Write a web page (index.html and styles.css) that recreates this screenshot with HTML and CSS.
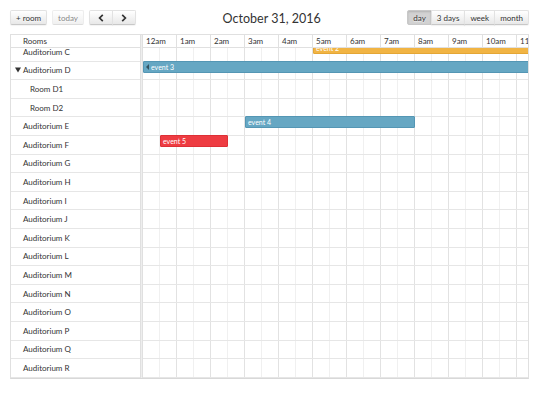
FILE: index.html
```html
<!DOCTYPE html>
<html lang="en">
  <head>
    <meta name="viewport" content="width=device-width, initial-scale=1.0" />
    <title>Scheduler</title>
    <link rel="stylesheet" href="styles.css">
  </head>
  <body>
    <div class="calendar">
      <div class="toolbar">
        <div class="toolbar-left">
          <button class="btn">+ room</button>
          <button class="btn" disabled>today</button>
          <div class="btn-group">
            <button class="btn arrow">
              <svg width="6" height="8" viewBox="0 0 6 8"><path d="M4.8 0.8 L1.6 4 L4.8 7.2" fill="none" stroke="#333" stroke-width="1.7"/></svg>
            </button>
            <button class="btn arrow">
              <svg width="6" height="8" viewBox="0 0 6 8"><path d="M1.2 0.8 L4.4 4 L1.2 7.2" fill="none" stroke="#333" stroke-width="1.7"/></svg>
            </button>
          </div>
        </div>
        <h2 class="title">October 31, 2016</h2>
        <div class="btn-group">
          <button class="btn active">day</button>
          <button class="btn">3 days</button>
          <button class="btn">week</button>
          <button class="btn">month</button>
        </div>
      </div>

      <div class="view">
        <!-- resource list -->
        <div class="resource-area">
          <div class="head"><span class="spacer"></span>Rooms</div>
          <div class="body">
            <div class="rows">
              <div class="row"><span class="spacer"></span>Auditorium C</div>
              <div class="row"><span class="spacer expander"><svg width="6" height="6" viewBox="0 0 6 6"><path d="M0 0.5 H6 L3 5.5 Z" fill="#333"/></svg></span>Auditorium D</div>
              <div class="row child"><span class="spacer"></span>Room D1</div>
              <div class="row child"><span class="spacer"></span>Room D2</div>
              <div class="row"><span class="spacer"></span>Auditorium E</div>
              <div class="row"><span class="spacer"></span>Auditorium F</div>
              <div class="row"><span class="spacer"></span>Auditorium G</div>
              <div class="row"><span class="spacer"></span>Auditorium H</div>
              <div class="row"><span class="spacer"></span>Auditorium I</div>
              <div class="row"><span class="spacer"></span>Auditorium J</div>
              <div class="row"><span class="spacer"></span>Auditorium K</div>
              <div class="row"><span class="spacer"></span>Auditorium L</div>
              <div class="row"><span class="spacer"></span>Auditorium M</div>
              <div class="row"><span class="spacer"></span>Auditorium N</div>
              <div class="row"><span class="spacer"></span>Auditorium O</div>
              <div class="row"><span class="spacer"></span>Auditorium P</div>
              <div class="row"><span class="spacer"></span>Auditorium Q</div>
              <div class="row"><span class="spacer"></span>Auditorium R</div>
            </div>
          </div>
        </div>

        <div class="divider"></div>

        <!-- time grid -->
        <div class="time-area">
          <div class="head slots">
            <div class="slot">12am</div>
            <div class="slot">1am</div>
            <div class="slot">2am</div>
            <div class="slot">3am</div>
            <div class="slot">4am</div>
            <div class="slot">5am</div>
            <div class="slot">6am</div>
            <div class="slot">7am</div>
            <div class="slot">8am</div>
            <div class="slot">9am</div>
            <div class="slot">10am</div>
            <div class="slot">11am</div>
          </div>
          <div class="body">
            <div class="rows lanes">
              <div class="lane">
                <div class="event orange" style="left: 170px; width: 238px;">event 2</div>
              </div>
              <div class="lane">
                <div class="event blue not-start" style="left: 0; width: 408px;">event 3</div>
              </div>
              <div class="lane"></div>
              <div class="lane"></div>
              <div class="lane">
                <div class="event blue" style="left: 102px; width: 170px;">event 4</div>
              </div>
              <div class="lane">
                <div class="event red" style="left: 17px; width: 68px;">event 5</div>
              </div>
              <div class="lane"></div>
              <div class="lane"></div>
              <div class="lane"></div>
              <div class="lane"></div>
              <div class="lane"></div>
              <div class="lane"></div>
              <div class="lane"></div>
              <div class="lane"></div>
              <div class="lane"></div>
              <div class="lane"></div>
              <div class="lane"></div>
              <div class="lane"></div>
            </div>
          </div>
        </div>
      </div>
    </div>
  </body>
</html>
```

FILE: styles.css
```css
* {
  padding: 0;
  margin: 0;
  box-sizing: border-box;
}
body {
  font-family: Lato, "Open Sans", sans-serif;
  font-size: 8px;
  color: #333;
  background-color: #ffffff;
}
.calendar {
  width: 519px;
  margin: 10px 0 0 10px;
}

/* toolbar */
.toolbar {
  display: flex;
  align-items: center;
  height: 15px;
  margin-bottom: 9px;
}
.toolbar-left {
  display: flex;
  gap: 5px;
}
.title {
  flex: 1;
  text-align: center;
  font-size: 12.5px;
  font-weight: 400;
  color: #333;
  margin-top: 1px;
}
.btn {
  height: 15px;
  padding: 0 5px;
  font-family: inherit;
  font-size: 8px;
  color: #333;
  background: linear-gradient(#ffffff, #e8e8e8);
  border: 1px solid #e2e2e2;
  border-bottom-color: #c8c8c8;
  border-radius: 2px;
  box-shadow: 0 1px 1px rgba(0, 0, 0, 0.05);
  text-shadow: 0 1px 1px rgba(255, 255, 255, 0.75);
}
.btn:disabled {
  opacity: 0.6;
  box-shadow: none;
}
.btn.active {
  background: #d2d2d2;
  border-color: #c8c8c8;
  box-shadow: inset 0 1px 2px rgba(0, 0, 0, 0.15);
}
.btn.arrow {
  width: 24px;
  display: flex;
  align-items: center;
  justify-content: center;
}
.btn-group {
  display: flex;
}
.btn-group .btn {
  border-radius: 0;
}
.btn-group .btn + .btn {
  margin-left: -1px;
}
.btn-group .btn:first-child {
  border-radius: 2px 0 0 2px;
}
.btn-group .btn:last-child {
  border-radius: 0 2px 2px 0;
}

/* view */
.view {
  display: flex;
  border: 1px solid #e0e0e0;
  border-bottom-color: #d8d8d8;
}
.head {
  height: 13px;
  line-height: 12px;
  border-bottom: 1px solid #e0e0e0;
}
.body {
  height: 330px;
  overflow: hidden;
}
.rows {
  margin-top: -5px;
}
.resource-area {
  width: 129px;
}
.resource-area .head,
.row {
  display: flex;
  align-items: center;
  padding-left: 3px;
}
.row {
  height: 18.6px;
  border-bottom: 1px solid #e6e6e6;
  white-space: nowrap;
}
.row.child {
  padding-left: 10px;
}
.spacer {
  width: 9px;
  flex-shrink: 0;
  display: flex;
  align-items: center;
}
.expander svg {
  margin-left: 1px;
}
.divider {
  width: 3px;
  background-color: #eeeeee;
  border-left: 1px solid #e0e0e0;
  border-right: 1px solid #e0e0e0;
}
.time-area {
  flex: 1;
  overflow: hidden;
}
.slots {
  display: flex;
  width: 408px;
}
.slot {
  width: 34px;
  flex-shrink: 0;
  padding-left: 3px;
  border-right: 1px solid #e0e0e0;
  white-space: nowrap;
}
.lanes {
  width: 408px;
  background-image: linear-gradient(to right, #e2e2e2 1px, transparent 1px),
    linear-gradient(to right, #f0f0f0 1px, transparent 1px);
  background-size: 34px 100%, 34px 100%;
  background-position: 33px 0, 16px 0;
}
.lane {
  position: relative;
  height: 18.6px;
  border-bottom: 1px solid #e6e6e6;
}

/* events */
.event {
  position: absolute;
  top: -1px;
  height: 12px;
  padding-left: 2px;
  font-size: 7px;
  line-height: 10px;
  color: #ffffff;
  border: 1px solid;
  border-radius: 1px;
  white-space: nowrap;
  overflow: hidden;
  display: flex;
  align-items: center;
}
.event.blue {
  background-color: #66a7c3;
  border-color: #5496b4;
}
.event.red {
  background-color: #ee3c42;
  border-color: #dd3036;
}
.event.orange {
  background-color: #f1b444;
  border-color: #e4a635;
}
.event.not-start::before {
  content: "";
  border: 3px solid transparent;
  border-left: 0;
  border-right-color: rgba(0, 0, 0, 0.5);
  margin-right: 2px;
}
```
